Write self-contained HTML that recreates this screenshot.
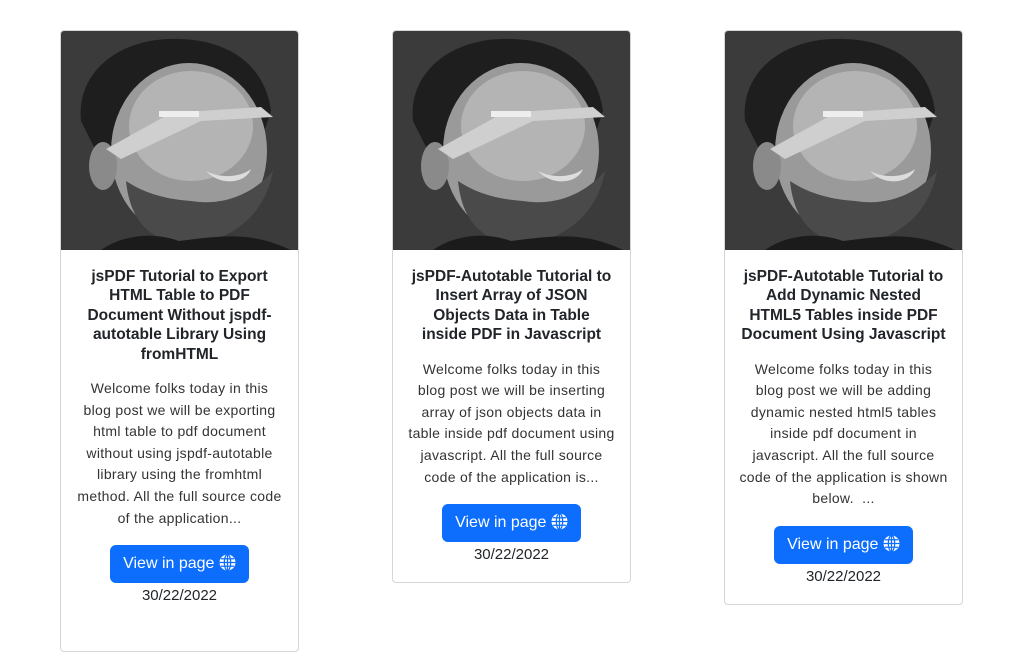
<!DOCTYPE html>
<html><head><meta charset="utf-8"><style>
body{margin:0;background:#fff;font-family:"Liberation Sans",sans-serif;color:#212529;width:1024px;height:620px;overflow:hidden;position:relative}
.card{position:absolute;top:30px;width:237px;border:1px solid #d6d6d6;border-radius:4px;overflow:hidden;background:#fff;text-align:center}
.img{display:block;width:237px;height:219px}
.body{padding:17px 16px 16px}
h5{margin:0 0 14px;font-size:15.5px;font-weight:600;line-height:19.4px;color:#212529}
p{margin:0 -2px 16px;font-size:14px;line-height:21.6px;color:#333;letter-spacing:0.3px}
.btn{display:inline-block;background:#0d6efd;color:#fff;border-radius:6px;font-size:16px;line-height:24px;padding:7px 13px;}
.btn svg{vertical-align:-3px}
.date{font-size:15px;line-height:22px;margin-top:2px}
</style></head><body>
<svg width="0" height="0" style="position:absolute"><defs>
<symbol id="face" viewBox="0 0 237 219">
<rect width="237" height="219" fill="#3b3b3b"/>
<path d="M20 90 C15 40 60 5 120 8 C175 10 205 40 210 80 L200 110 L40 130 Z" fill="#1e1e1e"/>
<ellipse cx="128" cy="120" rx="78" ry="88" fill="#9a9a9a"/>
<ellipse cx="130" cy="95" rx="62" ry="55" fill="#b4b4b4"/>
<ellipse cx="42" cy="135" rx="14" ry="24" fill="#8a8a8a"/>
<path d="M65 150 C70 200 100 215 135 212 C175 208 205 180 212 140 C190 165 160 175 130 170 C100 168 80 160 65 150 Z" fill="#4a4a4a"/>
<path d="M40 219 C60 205 90 200 118 210 C160 205 190 200 230 219 Z" fill="#1b1b1b"/>
<path d="M45 118 L110 82 L200 76 L212 86 L140 90 L60 128 Z" fill="#cfcfcf"/>
<rect x="98" y="80" width="40" height="6" fill="#eee"/>
<path d="M145 140 C160 148 180 146 190 138 C185 152 160 156 145 140Z" fill="#ddd"/>
</symbol>
<symbol id="globe" viewBox="0 0 16 16"><circle cx="8" cy="8" r="7.5" fill="#fff"/><g stroke="#0d6efd" stroke-width="1.2" fill="none"><ellipse cx="8" cy="8" rx="3" ry="7.5"/><line x1="8" y1="0.5" x2="8" y2="15.5"/><line x1="0.5" y1="8" x2="15.5" y2="8"/><line x1="1.8" y1="4.5" x2="14.2" y2="4.5"/><line x1="1.8" y1="11.5" x2="14.2" y2="11.5"/></g></symbol>
</defs></svg>

<div class="card" style="left:60px;height:620px">
<svg class="img"><use href="#face"/></svg>
<div class="body">
<h5>jsPDF Tutorial to Export HTML Table to PDF Document Without jspdf-autotable Library Using fromHTML</h5>
<p>Welcome folks today in this<br>blog post we will be exporting<br>html table to pdf document<br>without using jspdf-autotable<br>library using the fromhtml<br>method. All the full source code<br>of the application...</p>
<span class="btn">View in page <svg width="17" height="17"><use href="#globe"/></svg></span>
<div class="date">30/22/2022</div>
</div></div>

<div class="card" style="left:392px">
<svg class="img"><use href="#face"/></svg>
<div class="body">
<h5>jsPDF-Autotable Tutorial to Insert Array of JSON Objects Data in Table inside PDF in Javascript</h5>
<p>Welcome folks today in this<br>blog post we will be inserting<br>array of json objects data in<br>table inside pdf document using<br>javascript. All the full source<br>code of the application is...</p>
<span class="btn">View in page <svg width="17" height="17"><use href="#globe"/></svg></span>
<div class="date">30/22/2022</div>
</div></div>

<div class="card" style="left:724px">
<svg class="img"><use href="#face"/></svg>
<div class="body">
<h5>jsPDF-Autotable Tutorial to Add Dynamic Nested HTML5 Tables inside PDF Document Using Javascript</h5>
<p>Welcome folks today in this<br>blog post we will be adding<br>dynamic nested html5 tables<br>inside pdf document in<br>javascript. All the full source<br>code of the application is shown<br>below. &nbsp;...</p>
<span class="btn">View in page <svg width="17" height="17"><use href="#globe"/></svg></span>
<div class="date">30/22/2022</div>
</div></div>
</body></html>
